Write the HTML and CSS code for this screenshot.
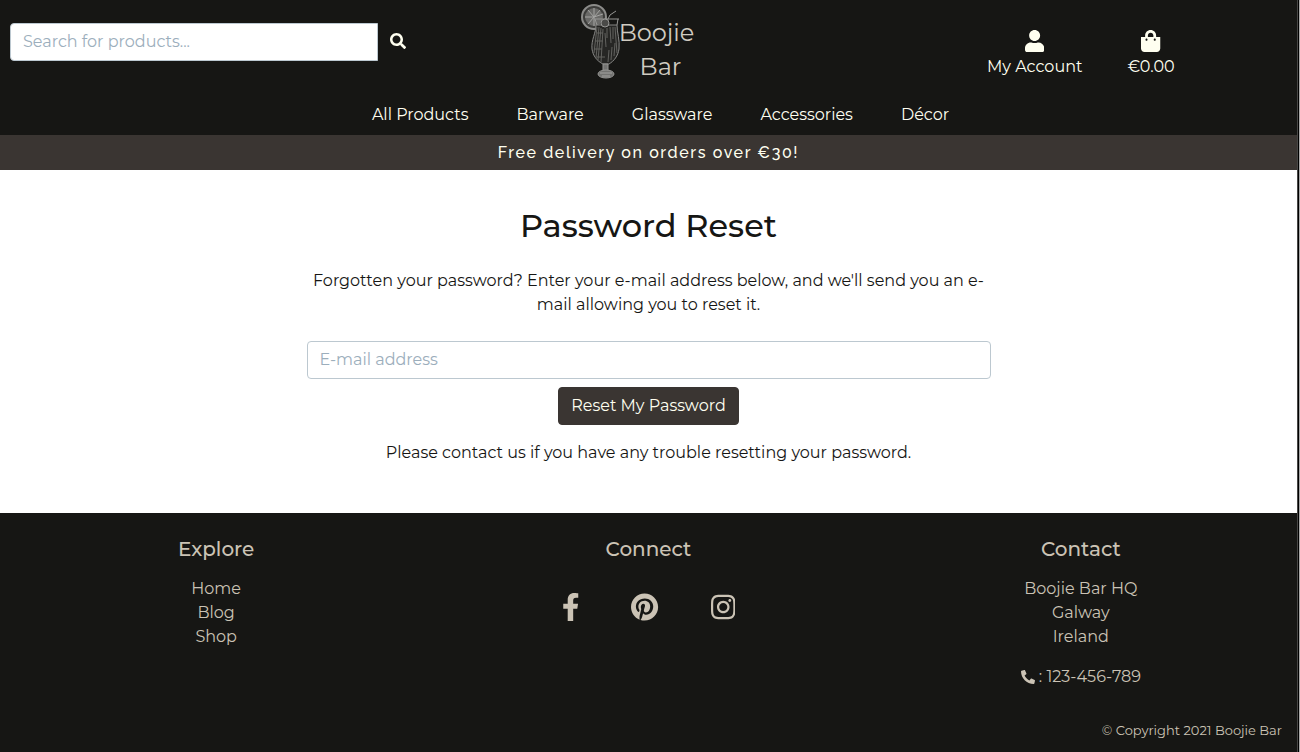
FILE: index.html
```html
<!DOCTYPE html>
<html lang="en">
<head>
<meta charset="utf-8">
<meta name="viewport" content="width=device-width, initial-scale=1">
<title>Password Reset | Boojie Bar</title>
<link rel="stylesheet" href="styles.css">
</head>
<body>
<header class="site-header">
  <div class="top-bar">
    <form class="search" role="search">
      <input class="field search-field" type="search" placeholder="Search for products..." aria-label="Search for products">
      <button class="search-button" type="submit" aria-label="Search">
        <svg class="icon-search" viewBox="0 0 512 512" aria-hidden="true"><path d="M505 442.700L405.300 343c-4.500-4.500-10.600-7-17-7H372c27.600-35.300 44-79.700 44-128C416 93.100 322.900 0 208 0S0 93.100 0 208s93.100 208 208 208c48.300 0 92.700-16.400 128-44v16.300c0 6.400 2.500 12.500 7 17l99.700 99.700c9.400 9.400 24.600 9.400 33.900 0l28.300-28.300c9.400-9.400 9.400-24.600.1-34zM208 336c-70.700 0-128-57.200-128-128 0-70.700 57.200-128 128-128 70.700 0 128 57.200 128 128 0 70.700-57.200 128-128 128z"/></svg>
      </button>
    </form>
    <a class="logo" href="#">
      <svg class="logo-drink" viewBox="0 0 44 76" aria-hidden="true">
        <circle class="slice" cx="15" cy="14" r="12"/>
        <circle class="pulp" cx="15" cy="14" r="9"/>
        <path class="segments" d="M15 14V5M15 14l6-7M15 14H6M15 14l-6-7M15 14l-6 7M15 14v9M15 14l9-3"/>
        <path class="rim" d="M15 16h25M16 16l2 6M39 16l-1 6M28 18l3-6 6-4"/>
        <path class="glass" d="M17 22h21c0 8 3 15 2 24-1 7-5 12-10 15h-6c-6-3-10-8-11-15-1-9 4-16 4-24z"/>
        <path class="fine" d="M18 24l-3 26M20 24l-3 31M22 25l-3 32M24 26l-2 33M18 30h6M16 38h8M15 46h8M18 54h8M28 25v10M31 24l1 16M34 24v12M36 24l2 26M36 40l-1 13M33 44l-1 13M30 47l-1 12M26 30l1 14"/>
        <circle class="cherry" cx="26" cy="20" r="4"/>
        <path class="stem" d="M24 61h5v7h-5z"/>
        <ellipse class="foot" cx="27" cy="71" rx="8" ry="4"/>
        <path class="segments" d="M21 70h12M23 73h8"/>
      </svg>
      <span class="logo-name"><span>Boojie</span><span class="logo-second">Bar</span></span>
    </a>
    <div class="account-links">
      <a class="account-link" href="#">
        <svg class="icon-account" viewBox="0 0 448 512" aria-hidden="true"><path d="M224 256c70.700 0 128-57.300 128-128S294.700 0 224 0 96 57.300 96 128s57.300 128 128 128zm89.600 32h-16.700c-22.200 10.200-46.900 16-72.900 16s-50.600-5.800-72.900-16h-16.700C60.200 288 0 348.200 0 422.400V464c0 26.500 21.500 48 48 48h352c26.500 0 48-21.500 48-48v-41.600c0-74.200-60.200-134.400-134.400-134.400z"/></svg>
        <span>My Account</span>
      </a>
      <a class="account-link" href="#">
        <svg class="icon-account" viewBox="0 0 448 512" aria-hidden="true"><path d="M352 160v-32C352 57.420 294.579 0 224 0 153.420 0 96 57.420 96 128v32H0v272c0 44.183 35.817 80 80 80h288c44.183 0 80-35.817 80-80V160h-96zm-192-32c0-35.290 28.710-64 64-64s64 28.710 64 64v32H160v-32zm160 120c-13.255 0-24-10.745-24-24s10.745-24 24-24 24 10.745 24 24-10.745 24-24 24zm-192 0c-13.255 0-24-10.745-24-24s10.745-24 24-24 24 10.745 24 24-10.745 24-24 24z"/></svg>
        <span>€0.00</span>
      </a>
    </div>
  </div>
  <nav class="main-nav" aria-label="Main">
    <a href="#">All Products</a>
    <a href="#">Barware</a>
    <a href="#">Glassware</a>
    <a href="#">Accessories</a>
    <a href="#">Décor</a>
  </nav>
</header>
<p class="banner">Free delivery on orders over €30!</p>
<main class="content">
  <h1 class="title">Password Reset</h1>
  <p class="intro">Forgotten your password? Enter your e-mail address below, and we'll send you an e-mail allowing you to reset it.</p>
  <form class="reset-form">
    <input class="field" type="email" placeholder="E-mail address" aria-label="E-mail address">
    <button class="reset-button" type="submit">Reset My Password</button>
  </form>
  <p class="help">Please contact us if you have any trouble resetting your password.</p>
</main>
<footer class="site-footer">
  <div class="footer-columns">
    <section class="footer-column">
      <h2 class="footer-title">Explore</h2>
      <a href="#">Home</a>
      <a href="#">Blog</a>
      <a href="#">Shop</a>
    </section>
    <section class="footer-column">
      <h2 class="footer-title">Connect</h2>
      <div class="social">
        <a href="#" aria-label="Facebook"><svg class="icon-social" viewBox="0 0 320 512" aria-hidden="true"><path d="M279.140 288l14.220-92.660h-88.910v-60.130c0-25.350 12.420-50.060 52.240-50.060h40.420V6.260S260.430 0 225.360 0c-73.220 0-121.080 44.380-121.080 124.720v70.620H22.890V288h81.390v224h100.170V288z"/></svg></a>
        <a href="#" aria-label="Pinterest"><svg class="icon-social" viewBox="0 0 496 512" aria-hidden="true"><path d="M496 256c0 137-111 248-248 248-25.600 0-50.200-3.900-73.400-11.100 10.100-16.500 25.200-43.500 30.800-65 3-11.600 15.400-59 15.400-59 8.100 15.400 31.700 28.500 56.800 28.500 74.800 0 128.700-68.800 128.700-154.300 0-81.900-66.900-143.200-152.900-143.200-107 0-163.900 71.800-163.900 150.100 0 36.400 19.400 81.700 50.300 96.100 4.700 2.200 7.200 1.200 8.300-3.300.8-3.400 5-20.300 6.900-28.100.6-2.500.3-4.700-1.700-7.100-10.100-12.500-18.300-35.300-18.300-56.600 0-54.700 41.400-107.600 112-107.600 60.900 0 103.600 41.500 103.600 100.900 0 67.100-33.900 113.600-78 113.600-24.300 0-42.600-20.100-36.700-44.800 7-29.500 20.500-61.300 20.500-82.600 0-19-10.200-34.900-31.400-34.900-24.900 0-44.900 25.700-44.900 60.200 0 22 7.400 36.800 7.400 36.800s-24.500 103.800-29 123.200c-5 21.400-3 51.600-.9 71.200C65.400 450.900 0 361.100 0 256 0 119 111 8 248 8s248 111 248 248z"/></svg></a>
        <a href="#" aria-label="Instagram"><svg class="icon-social" viewBox="0 0 448 512" aria-hidden="true"><path d="M224.100 141c-63.600 0-114.900 51.300-114.900 114.900s51.300 114.900 114.900 114.900S339 319.500 339 255.900 287.700 141 224.100 141zm0 189.600c-41.100 0-74.700-33.500-74.700-74.700s33.500-74.700 74.700-74.700 74.700 33.500 74.700 74.700-33.600 74.700-74.700 74.700zm146.400-194.300c0 14.900-12 26.800-26.800 26.800-14.900 0-26.800-12-26.800-26.800s12-26.800 26.800-26.800 26.800 12 26.800 26.800zm76.100 27.200c-1.700-35.900-9.900-67.700-36.200-93.900-26.200-26.200-58-34.400-93.900-36.200-37-2.100-147.900-2.100-184.900 0-35.800 1.700-67.600 9.900-93.900 36.100s-34.400 58-36.200 93.900c-2.100 37-2.100 147.900 0 184.900 1.700 35.900 9.900 67.700 36.200 93.900s58 34.400 93.900 36.200c37 2.100 147.900 2.100 184.900 0 35.900-1.700 67.700-9.900 93.900-36.200 26.200-26.200 34.400-58 36.200-93.900 2.100-37 2.100-147.800 0-184.800zM398.800 388c-7.800 19.600-22.900 34.700-42.600 42.600-29.500 11.700-99.500 9-132.100 9s-102.700 2.600-132.100-9c-19.600-7.800-34.700-22.900-42.600-42.600-11.700-29.500-9-99.500-9-132.100s-2.600-102.700 9-132.100c7.800-19.600 22.900-34.700 42.600-42.600 29.500-11.700 99.500-9 132.100-9s102.700-2.600 132.100 9c19.600 7.800 34.700 22.900 42.600 42.600 11.700 29.500 9 99.500 9 132.100s2.700 102.700-9 132.100z"/></svg></a>
      </div>
    </section>
    <section class="footer-column">
      <h2 class="footer-title">Contact</h2>
      <p>Boojie Bar HQ<br>Galway<br>Ireland</p>
      <p class="phone"><svg class="icon-phone" viewBox="0 0 512 512" aria-hidden="true"><path d="M493.400 24.600l-104-24c-11.300-2.600-22.900 3.300-27.500 13.900l-48 112c-4.200 9.800-1.400 21.300 6.900 28l60.600 49.600c-36 76.700-98.900 140.500-177.200 177.200l-49.600-60.600c-6.800-8.300-18.200-11.100-28-6.900l-112 48C3.900 366.500-2 378.100.6 389.400l24 104C27.100 504.200 36.700 512 48 512c256.100 0 464-207.500 464-464 0-11.200-7.700-20.900-18.600-23.400z" transform="matrix(-1 0 0 1 512 0)"/></svg> : 123-456-789</p>
    </section>
  </div>
  <p class="copyright">© Copyright 2021 Boojie Bar</p>
</footer>
</body>
</html>
```
FILE: styles.css
```css
* { box-sizing: border-box; }

body {
  margin: 0;
  min-height: 100vh;
  display: flex;
  flex-direction: column;
  border-right: 3px solid #000;
  border-image: linear-gradient(to left, #a8a8a8 1px, #000 1px 2px, #484847 2px) 0 3 0 0;
  background: #fff;
  color: #161614;
  font-family: Montserrat, Inter, "Open Sans", sans-serif;
  font-size: 16px;
  line-height: 24px;
}

p, h1, h2 { margin: 0; }
a { color: inherit; text-decoration: none; }
svg { fill: currentColor; }
input, button { font: inherit; }

.site-header {
  background: #161614;
  color: #fffff0;
}

.top-bar {
  display: grid;
  grid-template-columns: 1fr 1fr 1fr;
  align-items: start;
}

.search {
  display: flex;
  padding: 23px 10px 0;
}

.field {
  width: 100%;
  height: 38px;
  padding: 5px 12px 7px;
  border: 1px solid #bcc8d0;
  border-radius: 4px;
  background: #fff;
  color: #161614;
}
.field::placeholder { color: #9caebc; opacity: 1; }

.search-field {
  flex: 1;
  min-width: 0;
  max-width: 368px;
  border-radius: 4px 0 0 4px;
}

.search-button {
  display: flex;
  align-items: center;
  padding: 0 12px 2px;
  border: 0;
  background: transparent;
  color: #fffff0;
}
.icon-search { width: 16px; height: 16px; }

.logo {
  display: flex;
  justify-content: center;
  padding: 3px 24px 0 0;
  color: #d0cbc1;
}
.logo-drink {
  width: 44px;
  height: 76px;
  margin-right: -4px;
  fill: none;
  stroke: #969694;
}
.slice { fill: #3c3c3a; stroke: #8c8c8a; stroke-width: 2; }
.pulp { fill: #6a6a68; stroke: none; }
.segments { stroke: #a4a4a2; }
.fine { stroke: #62625f; }
.cherry { fill: #4a4a48; }
.stem, .foot { fill: #737371; }
.glass { fill: #262624; stroke: #868684; }

.logo-name {
  display: flex;
  flex-direction: column;
  align-items: center;
  padding-top: 13px;
  font-size: 24px;
  font-weight: 400;
  line-height: 34px;
}
.logo-second { padding-left: 8px; }

.account-links {
  display: flex;
  justify-content: center;
  gap: 45px;
  padding-top: 30px;
}
.account-link {
  display: flex;
  flex-direction: column;
  align-items: center;
  gap: 3px;
}
.icon-account { height: 22px; }

.main-nav {
  display: flex;
  justify-content: center;
  gap: 48px;
  padding: 19px 0 8px 24px;
}

.banner {
  padding: 6px 0 5px;
  background: #3a3532;
  color: #fffff0;
  font-family: Raleway, Lato, sans-serif;
  font-weight: 500;
  font-variant-numeric: oldstyle-nums;
  letter-spacing: 0.1em;
  text-align: center;
}

.content {
  width: 100%;
  max-width: 708px;
  margin: 0 auto;
  padding: 36px 12px 48px;
  text-align: center;
}
.title {
  margin-bottom: 23px;
  font-size: 32px;
  font-weight: 500;
  line-height: 40px;
}
.intro { margin-bottom: 24px; }
.reset-form {
  display: flex;
  flex-direction: column;
  align-items: center;
  gap: 8px;
  margin-bottom: 16px;
}
.reset-button {
  height: 38px;
  padding: 6px 12px;
  border: 1px solid #3a3532;
  border-radius: 4px;
  background: #3a3532;
  color: #fffff0;
}

.site-footer {
  flex: 1;
  display: flex;
  flex-direction: column;
  justify-content: space-between;
  gap: 24px;
  padding: 24px 0 10px;
  background: #161614;
  color: #cbc3b5;
}
.footer-columns {
  display: grid;
  grid-template-columns: 1fr 1fr 1fr;
}
.footer-column {
  display: flex;
  flex-direction: column;
  align-items: center;
  text-align: center;
}
.footer-title {
  margin-bottom: 16px;
  font-size: 20px;
  font-weight: 500;
  line-height: 24px;
}
.social {
  display: flex;
  align-items: center;
  gap: 52px;
  padding-top: 16px;
}
.social a { display: flex; }
.icon-social { height: 28px; }
.phone { margin-top: 16px; }
.icon-phone { width: 14px; height: 14px; vertical-align: -2px; }
.copyright {
  padding-right: 15px;
  font-size: 13px;
  text-align: right;
}
```
